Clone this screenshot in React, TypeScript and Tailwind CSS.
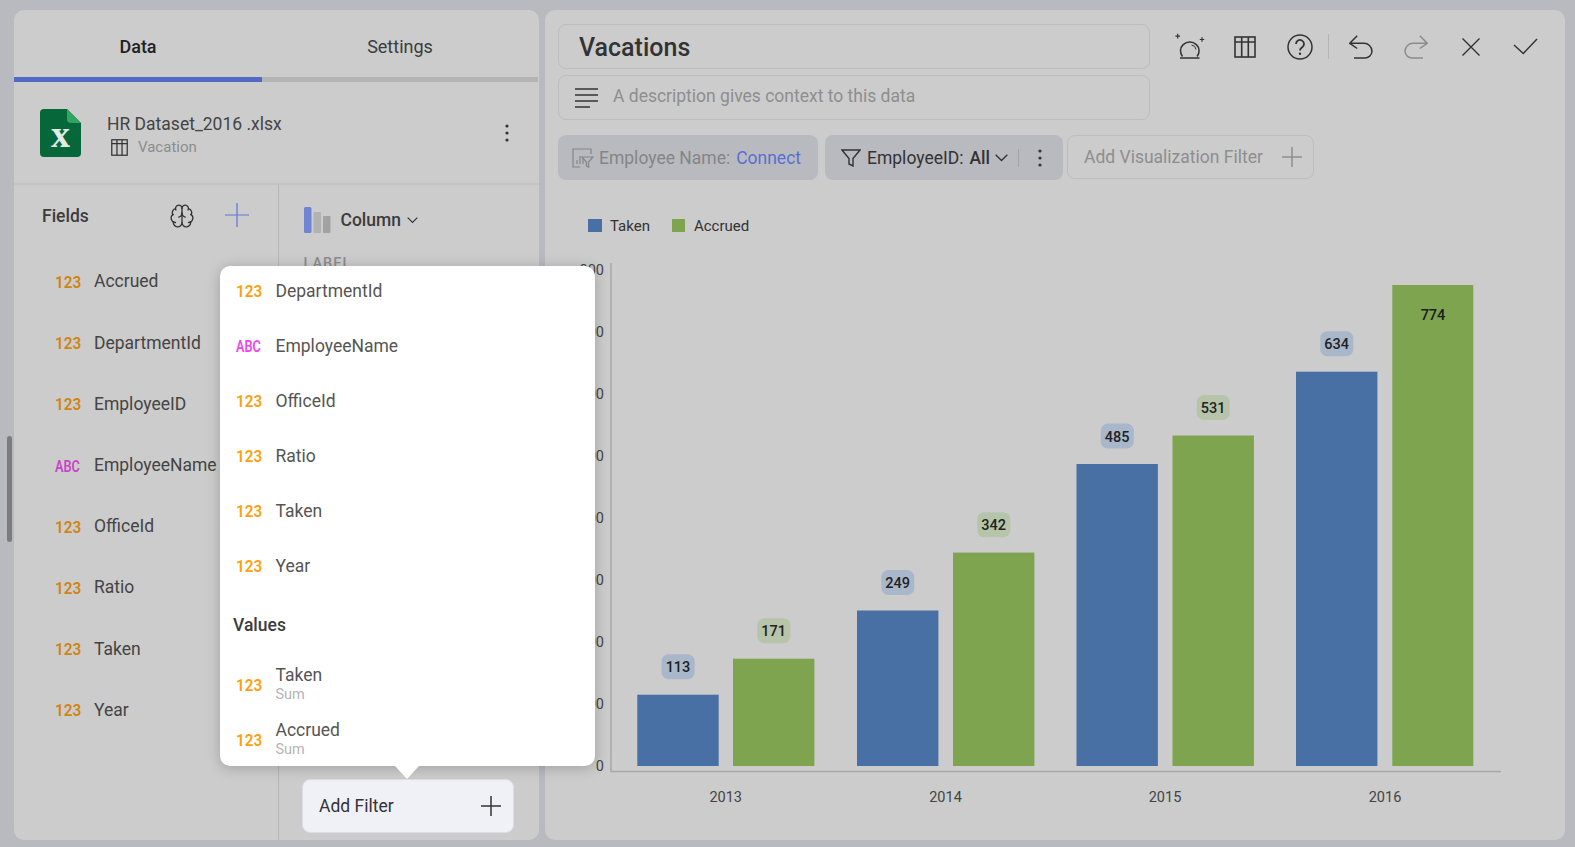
import { Brain } from 'lucide-react'

const fields = [
  { type: '123', name: 'Accrued' },
  { type: '123', name: 'DepartmentId' },
  { type: '123', name: 'EmployeeID' },
  { type: 'ABC', name: 'EmployeeName' },
  { type: '123', name: 'OfficeId' },
  { type: '123', name: 'Ratio' },
  { type: '123', name: 'Taken' },
  { type: '123', name: 'Year' },
]

const menuFields = [
  { type: '123', name: 'DepartmentId' },
  { type: 'ABC', name: 'EmployeeName' },
  { type: '123', name: 'OfficeId' },
  { type: '123', name: 'Ratio' },
  { type: '123', name: 'Taken' },
  { type: '123', name: 'Year' },
]

// x, top of bar, value; all in page coordinates because the svg viewBox is
const bars = [
  { x: 637.3, top: 694.7, value: 113, fill: '#4870a5', chip: '#a9b7ca' },
  { x: 733, top: 658.7, value: 171, fill: '#7ea44f', chip: '#b6c5a9' },
  { x: 857, top: 610.5, value: 249, fill: '#4870a5', chip: '#a9b7ca' },
  { x: 953, top: 552.6, value: 342, fill: '#7ea44f', chip: '#b6c5a9' },
  { x: 1076.5, top: 464, value: 485, fill: '#4870a5', chip: '#a9b7ca' },
  { x: 1172.5, top: 435.5, value: 531, fill: '#7ea44f', chip: '#b6c5a9' },
  { x: 1296, top: 371.7, value: 634, fill: '#4870a5', chip: '#a9b7ca' },
]

const yLabels = ['800', '700', '600', '500', '400', '300', '200', '100', '0']
const years = [
  { x: 725.7, label: '2013' },
  { x: 945.5, label: '2014' },
  { x: 1165, label: '2015' },
  { x: 1385, label: '2016' },
]

function TypeTag({ type, dim }: { type: string; dim?: boolean }) {
  if (type === 'ABC') {
    return (
      <span
        className={`inline-block w-[26px] origin-left translate-y-[1px] scale-x-[.75] whitespace-nowrap text-[17px] font-semibold leading-none ${
          dim ? 'text-[#c944c9]' : 'text-[#f044ee]'
        }`}
      >
        ABC
      </span>
    )
  }
  return (
    <span
      className={`inline-block w-[26px] origin-left translate-y-[1px] scale-x-[.9] text-[17px] font-semibold leading-none ${
        dim ? 'text-[#d08413]' : 'text-[#ff9f0e]'
      }`}
    >
      123
    </span>
  )
}

function Kebab({ className }: { className: string }) {
  return (
    <svg className={className} width="4" height="18" viewBox="0 0 4 18" fill="#333">
      <circle cx="2" cy="2" r="1.6" />
      <circle cx="2" cy="9" r="1.6" />
      <circle cx="2" cy="16" r="1.6" />
    </svg>
  )
}

function TableIcon({ size, className }: { size: number; className?: string }) {
  return (
    <svg className={className} width={size} height={size} viewBox="0 0 22 22" fill="none" stroke="#333" strokeWidth="1.6">
      <rect x="1" y="1" width="20" height="20" />
      <path d="M1 6h20M7.7 1v20M14.3 1v20" />
    </svg>
  )
}

function ToolCell({ children }: { children: React.ReactNode }) {
  return <div className="flex h-[45px] w-[55px] items-center justify-center">{children}</div>
}

function Toolbar() {
  return (
    <div className="ml-[13px] flex h-[45px] items-center">
      <ToolCell>
        <svg width="30" height="27" viewBox="1175 33 30 27" fill="none" stroke="#333" strokeWidth="1.5">
          <path d="M1182.5 56.5a9.3 9.3 0 0 1-2-6 9.3 8.4 0 0 1 18.6 0 9.3 9.3 0 0 1-2 6M1180 58h19.5" />
          <path d="M1191.5 45a5 5 0 0 1 4.5 4.5" strokeWidth="1" />
          <path d="M1177.7 33.8v4.6M1175.4 36.1h4.6M1202 37.3v4.4M1199.8 39.5h4.4" strokeWidth="1.2" />
        </svg>
      </ToolCell>
      <ToolCell>
        <TableIcon size={22} />
      </ToolCell>
      <ToolCell>
        <svg width="26" height="26" viewBox="0 0 26 26" fill="none" stroke="#333" strokeWidth="1.5">
          <circle cx="13" cy="13" r="12" />
          <path d="M9 10a4 4 0 1 1 6.2 3.3c-1.4.9-2.2 1.6-2.2 3.2" strokeWidth="1.8" />
          <circle cx="13" cy="19.8" r="1.2" fill="#333" stroke="none" />
        </svg>
      </ToolCell>
      <div className="h-[25px] w-px bg-[#b4b4b4]" />
      <div className="ml-[4.5px] flex">
        <ToolCell>
          <svg width="24" height="24" viewBox="1348.5 35 24 24" fill="none" stroke="#333" strokeWidth="1.5">
            <path d="M1356.7 35.7l-7.4 7.6 7.4 5.2M1349.3 43.3H1363a8 8 0 0 1 8.5 8 7 7 0 0 1-8 6.6h-10" />
          </svg>
        </ToolCell>
        <ToolCell>
          <svg width="24" height="24" viewBox="0 0 24 24" fill="none" stroke="#8c8c8c" strokeWidth="1.5">
            <path d="M15.8.7l7.4 7.6-7.4 5.2M23.2 8.3H9.5a8 8 0 0 0-8.5 8 7 7 0 0 0 8 6.6h10" />
          </svg>
        </ToolCell>
        <ToolCell>
          <svg width="18" height="18" viewBox="0 0 18 18" fill="none" stroke="#333" strokeWidth="1.4">
            <path d="M.5.5l17 17M17.5.5l-17 17" />
          </svg>
        </ToolCell>
        <ToolCell>
          <svg width="25" height="17" viewBox="0 0 25 17" fill="none" stroke="#333" strokeWidth="1.5">
            <path d="M1 7l9.3 8.5L24 1" />
          </svg>
        </ToolCell>
      </div>
    </div>
  )
}

function BarChart() {
  return (
    <svg width="1020" height="590" viewBox="545 245 1020 590" className="block font-['Roboto',sans-serif]">
      {yLabels.map((label, i) => (
        <text key={label} x="604" y={275 + i * 62} textAnchor="end" fontSize="14.5" fill="#444">
          {label}
        </text>
      ))}
      <path d="M611 263V771.5H1501" fill="none" stroke="#a8a8a8" strokeWidth="1.5" />
      {bars.map((bar) => (
        <g key={bar.value}>
          <rect x={bar.x} y={bar.top} width="81.4" height={766 - bar.top} fill={bar.fill} />
          <rect x={bar.x + 24.3} y={bar.top - 40.4} width="33" height="25" rx="7" fill={bar.chip} />
          <text x={bar.x + 40.7} y={bar.top - 22.5} textAnchor="middle" fontSize="14.5" fontWeight="500" fill="#222">
            {bar.value}
          </text>
        </g>
      ))}
      <rect x="1392.3" y="285" width="81" height="481" fill="#7ea44f" />
      <text x="1433" y="320" textAnchor="middle" fontSize="14.5" fontWeight="500" fill="#1c1c1c">
        774
      </text>
      {years.map((year) => (
        <text key={year.label} x={year.x} y="802" textAnchor="middle" fontSize="14.5" fill="#444">
          {year.label}
        </text>
      ))}
    </svg>
  )
}

function FieldPopup() {
  return (
    <div className="absolute left-[220px] top-[266px] w-[375px] h-[500px] rounded-[10px] bg-white pl-[16px] shadow-[0_2px_14px_rgba(0,0,0,0.22)]">
      <div className="flex flex-col gap-[6px]">
        {menuFields.map((field) => (
          <div key={field.name} className="flex h-[49px] items-center">
            <TypeTag type={field.type} />
            <span className="ml-[13.5px] translate-y-px text-[17.5px] text-[#555]">{field.name}</span>
          </div>
        ))}
      </div>
      <div className="mt-[10px] flex h-[49px] items-center text-[17.5px] font-medium text-[#3c3c3c]">
        <span className="-ml-[3px] translate-y-px">Values</span>
      </div>
      <div className="mt-[10.5px] flex flex-col gap-[6px]">
        {['Taken', 'Accrued'].map((name) => (
          <div key={name} className="flex h-[49px] items-center">
            <TypeTag type="123" />
            <div className="ml-[13.5px] flex translate-y-px flex-col">
              <span className="text-[17.5px] leading-[20px] text-[#555]">{name}</span>
              <span className="text-[14.5px] leading-[20px] text-[#b4b4b4]">Sum</span>
            </div>
          </div>
        ))}
      </div>
      <svg className="absolute left-[175px] top-[500px]" width="24" height="13" viewBox="0 0 24 13" fill="#fff">
        <path d="M0 0h24L12 13z" />
      </svg>
    </div>
  )
}

export default function App() {
  return (
    <div className="relative flex h-[847px] w-[1575px] gap-[6px] overflow-hidden bg-[#b9bac0] pb-[7px] pl-[14px] pr-[10px] pt-[10px] font-['Roboto',sans-serif]">
      {/* Left panel */}
      <div className="flex w-[525px] flex-col overflow-hidden rounded-[10px] bg-[#cccccc]">
        <div className="flex h-[67px] items-center pt-[6px] text-[18px]">
          <div className="w-[248px] text-center font-medium text-[#222]">Data</div>
          <div className="flex-1 pr-[1px] text-center text-[#3c3c3c]">Settings</div>
        </div>
        <div className="mr-[1px] flex h-[5px] bg-[#b4b4b4]">
          <div className="w-[248px] bg-[#5369c6]" />
        </div>

        <div className="flex h-[103px] items-center border-b-2 border-[#c4c4c4] pl-[26px]">
          <svg width="41" height="48" viewBox="0 0 41 48">
            <path d="M4 0h23l14 14v30a4 4 0 0 1-4 4H4a4 4 0 0 1-4-4V4a4 4 0 0 1 4-4z" fill="#05673a" />
            <path d="M27 0l14 14H31a4 4 0 0 1-4-4z" fill="#2fa562" />
            <text x="20.5" y="38" textAnchor="middle" fontSize="38" fontWeight="700" fill="#e4ebe4" fontFamily="'Liberation Serif', serif">
              x
            </text>
          </svg>
          <div className="ml-[26px] mt-[5px]">
            <div className="text-[17.5px] leading-[24px] text-[#444]">HR Dataset_2016 .xlsx</div>
            <div className="flex h-[22px] items-center pl-[4px]">
              <TableIcon size={17} />
              <span className="ml-[10px] text-[15px] text-[#8c8c8c]">Vacation</span>
            </div>
          </div>
          <Kebab className="ml-auto mr-[30px]" />
        </div>

        <div className="flex flex-1">
          <div className="w-[264.5px] border-r border-[#b6b6b6]">
            <div className="flex h-[66px] items-start pt-[18px]">
              <span className="ml-[28px] text-[17.5px] font-medium leading-[26px] text-[#3c3c3c]">Fields</span>
              <Brain className="ml-[80px] text-[#333]" size={26} strokeWidth={1.2} />
              <svg className="ml-[30px]" width="24" height="24" viewBox="0 0 24 24" stroke="#5d75d6" strokeWidth="1.2">
                <path d="M12 0v24M0 12h24" />
              </svg>
            </div>
            <div>
              {fields.map((field) => (
                <div key={field.name} className="flex h-[61.2px] items-center pl-[41px]">
                  <TypeTag type={field.type} dim />
                  <span className="ml-[13px] text-[17.5px] text-[#444]">{field.name}</span>
                </div>
              ))}
            </div>
          </div>

          <div className="flex flex-1 flex-col pl-[25px]">
            <div className="flex h-[72px] items-center pb-[2px]">
              <svg width="27" height="26" viewBox="0 0 27 26">
                <rect x="0" y="0" width="7.5" height="26" rx="1.5" fill="#6f84d4" />
                <rect x="9.5" y="5" width="7.5" height="21" rx="1" fill="#b2b2b2" />
                <rect x="19" y="9" width="7.5" height="17" rx="1" fill="#a2a2a2" />
              </svg>
              <span className="ml-[10px] text-[17.5px] font-medium text-[#3c3c3c]">Column</span>
              <svg className="ml-[6px]" width="11" height="7" viewBox="0 0 11 7" fill="none" stroke="#333" strokeWidth="1.2">
                <path d="M.7.7l4.8 4.8L10.3.7" />
              </svg>
            </div>
            <div className="text-[14.5px] font-medium leading-[14px] tracking-[1px] text-[#8c8c8c]">LABEL</div>
            <button className="mb-[7px] -ml-[1.5px] mt-auto flex h-[54px] w-[211.5px] items-center justify-between rounded-[8px] border border-[#dcdde2] bg-[#f0f1f6] pl-[16px] pr-[12px] text-[17.5px] text-[#333]">
              Add Filter
              <svg width="20" height="20" viewBox="0 0 20 20" stroke="#333" strokeWidth="1.5">
                <path d="M10 0v20M0 10h20" />
              </svg>
            </button>
          </div>
        </div>
      </div>

      {/* Right panel */}
      <div className="flex flex-1 flex-col overflow-hidden rounded-[10px] bg-[#cccccc] pt-[14px]">
        <div className="flex pl-[13px]">
          <div className="w-[591.5px]">
            <div className="flex h-[45px] items-center rounded-[8px] border border-[#bdbdbd] pl-[20px] pt-[3px] text-[25px] font-medium text-[#333]">
              Vacations
            </div>
            <div className="mt-[6px] flex h-[45px] items-center rounded-[8px] border border-[#bdbdbd] pl-[16px]">
              <svg width="23" height="20" viewBox="0 0 23 20" stroke="#333" strokeWidth="1.5">
                <path d="M0 1h23M0 7h23M0 13h23M0 19h15" />
              </svg>
              <span className="ml-[15px] -translate-y-px text-[17.5px] text-[#8e8e8e]">A description gives context to this data</span>
            </div>
          </div>
          <Toolbar />
        </div>

        <div className="ml-[13px] mt-[15px] flex h-[45px] text-[17.5px]">
          <div className="flex w-[259.5px] items-center rounded-[8px] bg-[#b9bac0] pl-[14px] text-[#858585]">
            <svg width="22" height="20" viewBox="0 0 22 20" fill="none" stroke="#858585" strokeWidth="1.2">
              <path d="M8 19H1V1h18v5" />
              <path d="M5 16v-4M8 16V8M11 16v-6" />
              <path d="M10 9h11l-4.4 5v5l-2.2-1v-4z" fill="#b9bac0" />
            </svg>
            <span className="ml-[5px] translate-y-px">Employee Name:</span>
            <span className="ml-[6px] translate-y-px text-[#5a6fd0]">Connect</span>
          </div>
          <div className="ml-[7.5px] flex w-[238px] items-center rounded-[8px] bg-[#b9bac0] pl-[16px] text-[#333]">
            <svg width="20" height="18" viewBox="0 0 20 18" fill="none" stroke="#333" strokeWidth="1.4">
              <path d="M1 1h18l-7 8.5V17l-4-2V9.5z" />
            </svg>
            <span className="ml-[6px] translate-y-px">EmployeeID:</span>
            <span className="ml-[6px] translate-y-px font-medium">All</span>
            <svg className="ml-[5px]" width="13" height="8" viewBox="0 0 13 8" fill="none" stroke="#333" strokeWidth="1.4">
              <path d="M.7.7l5.8 5.8L12.3.7" />
            </svg>
            <div className="ml-[10px] h-[18px] w-px bg-[#a3a3a8]" />
            <Kebab className="ml-[19px]" />
          </div>
          <div className="ml-[4px] flex h-[44px] w-[246.5px] items-center justify-between rounded-[8px] border border-[#bdbdbd] pl-[16px] pr-[11px] text-[#8e8e8e]">
            Add Visualization Filter
            <svg width="20" height="20" viewBox="0 0 20 20" stroke="#8e8e8e" strokeWidth="1.5">
              <path d="M10 0v20M0 10h20" />
            </svg>
          </div>
        </div>

        <div className="ml-[43px] mt-[39px] flex h-[13px] items-center text-[15px] text-[#333]">
          <div className="h-[13px] w-[13.5px] bg-[#4870a5]" />
          <span className="ml-[8.5px] translate-y-px">Taken</span>
          <div className="ml-[22px] h-[13px] w-[13.5px] bg-[#7ea44f]" />
          <span className="ml-[8.5px] translate-y-px">Accrued</span>
        </div>

        <div className="mt-[13px]">
          <BarChart />
        </div>
      </div>

      {/* Scrollbar of the field list */}
      <div className="absolute left-[7px] top-[436px] h-[106px] w-[5px] rounded-full bg-[#7c7c7e]" />

      <FieldPopup />
    </div>
  )
}
